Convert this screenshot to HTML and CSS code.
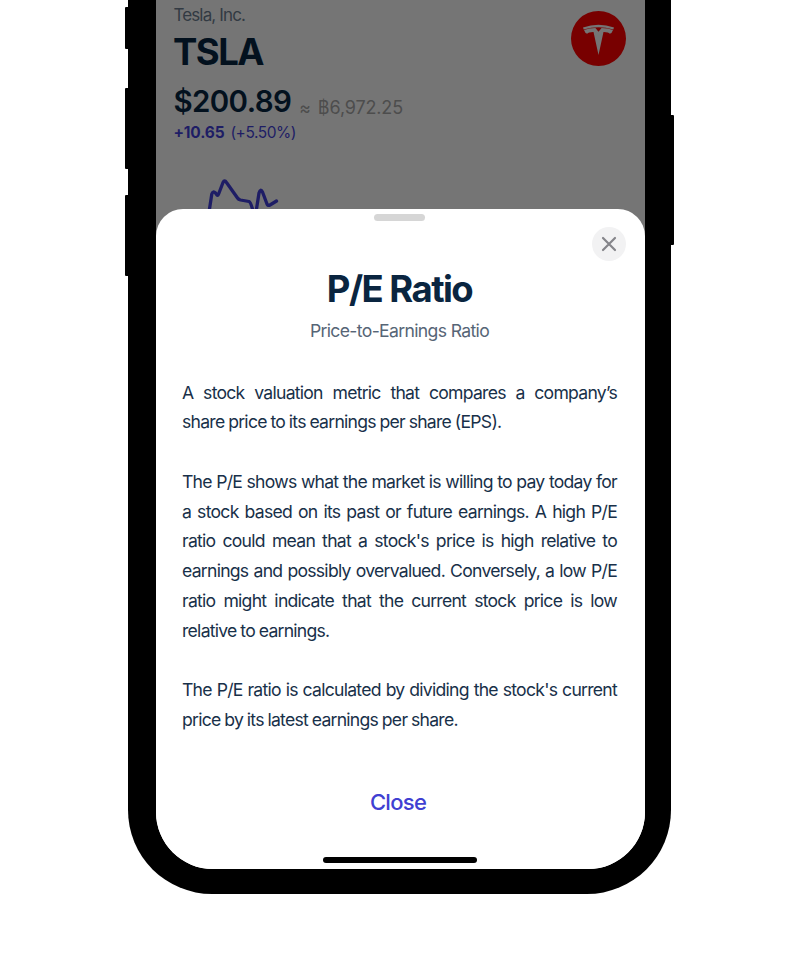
FILE: index.html
```html
<!DOCTYPE html>
<html lang="en">
<head>
<meta charset="utf-8">
<title>TSLA – P/E Ratio</title>
<link rel="stylesheet" href="styles.css">
</head>
<body>
<main class="phone">
  <i class="key key-mute"></i>
  <i class="key key-up"></i>
  <i class="key key-down"></i>
  <i class="key key-power"></i>
  <div class="screen">
    <section class="stock">
      <div class="quote">
        <p class="company">Tesla, Inc.</p>
        <h2 class="ticker">TSLA</h2>
        <p class="price-row"><span class="price">$200.89</span><span class="approx">≈</span><span class="converted">฿6,972.25</span></p>
        <p class="change"><b>+10.65</b><span>(+5.50%)</span></p>
        <svg class="chart" width="80" height="40" viewBox="0 0 80 40" fill="none"><path d="M2.500 36L4.800 21Q6 17.500 8.500 20L10 22Q11 23 12 20L16 9.500Q17.500 6.500 19.500 9.500L30.500 25Q31.500 26.500 33.500 27L42 28.500Q43.500 29 45.500 36M49.500 36L52 20Q53.500 15 55.500 19L60 31Q61 33.300 63 32L69.500 28" stroke="#1e1d65" stroke-width="3.300" stroke-linecap="round" stroke-linejoin="round"/></svg>
      </div>
      <svg class="logo" viewBox="0 0 55 55"><circle cx="27.500" cy="27.500" r="27.500" fill="#780000"/><g fill="#757575"><path d="M12 16.500Q27.500 11.200 43 16.500L42.300 18.500Q27.500 13.800 12.700 18.500Z"/><path d="M13 19Q18 17.200 24.400 17L27.500 20.800L30.600 17Q37 17.200 42 19Q41 22.200 38.800 22.800Q37.500 20.800 32.500 20.900L27.500 44L22.500 20.900Q17.500 20.800 16.200 22.800Q14 22.200 13 19Z"/></g></svg>
    </section>
    <section class="sheet">
      <div class="grabber"></div>
      <button class="dismiss" aria-label="Dismiss"><svg width="34" height="34" viewBox="0 0 34 34"><path d="M11 11L23 23M23 11L11 23" stroke="#85858a" stroke-width="2.200" stroke-linecap="round"/></svg></button>
      <h1 class="title">P/E Ratio</h1>
      <p class="subtitle">Price-to-Earnings Ratio</p>
      <div class="copy">
        <p><span class="line">A stock valuation metric that compares a company’s</span><span class="end">share price to its earnings per share (EPS).</span></p>
        <p><span class="line">The P/E shows what the market is willing to pay today for</span><span class="line">a stock based on its past or future earnings. A high P/E</span><span class="line">ratio could mean that a stock's price is high relative to</span><span class="line">earnings and possibly overvalued. Conversely, a low P/E</span><span class="line">ratio might indicate that the current stock price is low</span><span class="end">relative to earnings.</span></p>
        <p><span class="line">The P/E ratio is calculated by dividing the stock's current</span><span class="end">price by its latest earnings per share.</span></p>
      </div>
      <button class="close">Close</button>
      <div class="home"></div>
    </section>
  </div>
</main>
</body>
</html>
```
FILE: styles.css
```css
* { box-sizing: border-box; }
body { margin: 0; background: #fff; font-family: Inter, "Liberation Sans", sans-serif; overflow: hidden; }
p, h1, h2 { margin: 0; white-space: nowrap; }
button { border: 0; padding: 0; background: none; font: inherit; }
.phone { position: relative; width: 543px; height: 893.5px; margin-left: 128px; padding: 0 26px 24.5px 28px; background: #000; border-radius: 0 0 84px 84px; }
.key { position: absolute; left: -3px; width: 10px; background: #000; border-radius: 1px; }
.key-mute { top: 7px; height: 42px; }
.key-up { top: 88px; height: 81px; }
.key-down { top: 195px; height: 81px; }
.key-power { left: auto; right: -3px; top: 115px; height: 130px; }
.screen { height: 869px; background: linear-gradient(#757575 0 300px, #fff 300px); border-radius: 0 0 57px 57px; overflow: hidden; }
.stock { height: 209px; padding: 4px 19px 0 17.4px; display: flex; justify-content: space-between; overflow: hidden; }
.company { font-size: 17px; line-height: 22px; letter-spacing: -0.85px; color: #323a43; }
.ticker { margin: 5px 0 0 -0.5px; font-size: 36.5px; line-height: 42px; font-weight: 700; letter-spacing: -1.5px; color: #03111e; }
.price-row { margin-top: 10px; display: flex; align-items: baseline; height: 36px; line-height: 36px; }
.price { font-size: 29.5px; font-weight: 600; letter-spacing: -0.6px; color: #03111e; }
.approx { position: relative; top: 2px; margin-left: 8px; font-size: 17.5px; color: #4d4d4d; }
.converted { position: relative; top: 2px; margin-left: 7px; font-size: 18px; letter-spacing: -0.15px; color: #4d4d4d; }
.change { margin-top: 4px; display: flex; gap: 6px; font-size: 15.5px; line-height: 20px; letter-spacing: -0.45px; color: #1e1d65; }
.change b { font-weight: 700; letter-spacing: -0.15px; }
.chart { display: block; margin: 30px 0 0 34px; }
.logo { width: 55px; height: 55px; margin-top: 7px; flex: none; }
.sheet { position: relative; height: 660px; background: #fff; border-radius: 27px 27px 0 0; padding: 5px 2px 0 0; display: flex; flex-direction: column; align-items: center; color: #0a2540; }
.grabber { width: 50.5px; height: 7px; background: #d6d6d6; border-radius: 4px; flex: none; }
.dismiss { position: absolute; top: 18px; right: 19px; width: 34px; height: 34px; background: #f2f2f3; border-radius: 50%; }
.dismiss svg { display: block; }
.title { margin-top: 45.5px; font-size: 36.5px; line-height: 44px; font-weight: 700; letter-spacing: -1.55px; }
.subtitle { margin-top: 8px; font-size: 17.6px; line-height: 24px; letter-spacing: -0.65px; color: #566576; }
.copy { width: 435px; margin-top: 35px; font-size: 17.6px; line-height: 29.75px; letter-spacing: -0.74px; word-spacing: -0.5px; color: #183049; }
.copy p + p { margin-top: 29.75px; }
.line, .end { display: block; }
.line { text-align: justify; text-align-last: justify; white-space: normal; }
.close { margin-top: 52px; margin-right: 3px; font-size: 22px; line-height: 30px; font-weight: 500; letter-spacing: -0.7px; color: #4040d2; }
.home { margin-top: auto; margin-bottom: 6px; width: 154px; height: 6px; border-radius: 3px; background: #000; }
```
